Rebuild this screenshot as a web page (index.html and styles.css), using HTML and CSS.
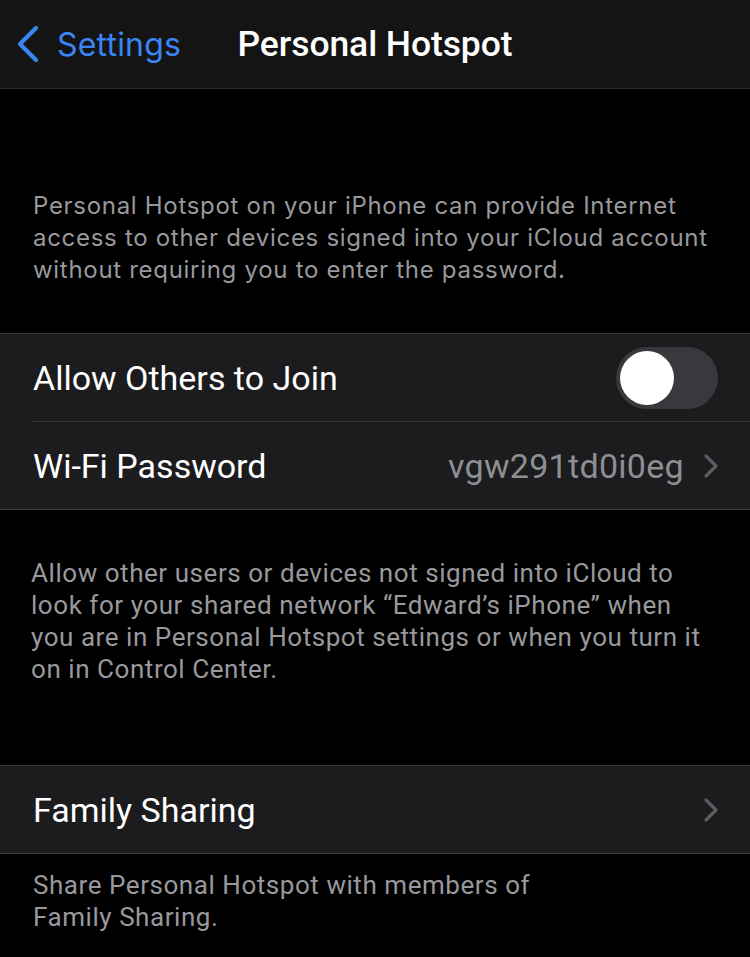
FILE: index.html
```html
<!DOCTYPE html>
<html lang="en">
<head>
  <meta charset="UTF-8">
  <meta name="viewport" content="width=device-width, initial-scale=1.0">
  <title>Personal Hotspot</title>
  <link rel="stylesheet" href="styles.css">
</head>
<body>
  <header class="navbar">
    <a class="back" href="#">
      <svg class="back-icon" width="26" height="40" viewBox="0 0 26 40"><path d="M22 4 L6 20 L22 36" fill="none" stroke="#3a85f3" stroke-width="4.2" stroke-linecap="round" stroke-linejoin="round"/></svg>
      <span>Settings</span>
    </a>
    <h1 class="title">Personal Hotspot</h1>
  </header>

  <p class="note note-top">Personal Hotspot on your iPhone can provide Internet<br>access to other devices signed into your iCloud account<br>without requiring you to enter the password.</p>

  <section class="group">
    <div class="row">
      <span class="label">Allow Others to Join</span>
      <span class="toggle"><span class="knob"></span></span>
    </div>
    <div class="row">
      <span class="label">Wi-Fi Password</span>
      <span class="value">vgw291td0i0eg</span>
      <svg class="chev" width="18" height="28" viewBox="0 0 18 28"><path d="M4 4 L14 14 L4 24" fill="none" stroke="#5b5b60" stroke-width="3.2" stroke-linecap="round" stroke-linejoin="round"/></svg>
    </div>
  </section>

  <p class="note note-mid">Allow other users or devices not signed into iCloud to<br>look for your shared network “Edward’s iPhone” when<br>you are in Personal Hotspot settings or when you turn it<br>on in Control Center.</p>

  <section class="group">
    <div class="row">
      <span class="label">Family Sharing</span>
      <svg class="chev" width="18" height="28" viewBox="0 0 18 28"><path d="M4 4 L14 14 L4 24" fill="none" stroke="#5b5b60" stroke-width="3.2" stroke-linecap="round" stroke-linejoin="round"/></svg>
    </div>
  </section>

  <p class="note note-bottom">Share Personal Hotspot with members of<br>Family Sharing.</p>
</body>
</html>
```

FILE: styles.css
```css
body {
  margin: 0;
  padding: 0;
  background: #000;
  color: #fff;
  font-family: Roboto, 'Noto Sans', sans-serif;
  width: 750px;
  height: 957px;
  overflow: hidden;
}

.navbar {
  position: relative;
  height: 88px;
  background: #141414;
  border-bottom: 1px solid #2b2b2d;
  display: flex;
  align-items: center;
  justify-content: center;
}

.back {
  position: absolute;
  left: 14px;
  top: 24px;
  display: flex;
  align-items: center;
  gap: 17px;
  color: #3a85f3;
  text-decoration: none;
  font-family: Inter, sans-serif;
  font-size: 32px;
  letter-spacing: 0.2px;
}

.title {
  margin: 0;
  font-size: 35.5px;
  font-weight: 500;
  letter-spacing: -0.1px;
}

.note {
  margin: 0;
  color: #98989d;
  font-size: 26px;
  letter-spacing: 0.55px;
  line-height: 32px;
  padding: 0 33px;
  white-space: nowrap;
}

.note-top {
  font-family: Inter, sans-serif;
  font-size: 24px;
  letter-spacing: 0.7px;
  padding-top: 101px;
  padding-bottom: 47px;
}

.note-mid {
  padding: 47px 31px 80px;
}

.note-bottom {
  padding-top: 15px;
}

.group {
  background: #1c1c1e;
  border-top: 1px solid #38383a;
  border-bottom: 1px solid #38383a;
}

.row {
  height: 87px;
  display: flex;
  align-items: center;
  margin-left: 33px;
  padding-right: 30px;
  gap: 18px;
}

.row + .row {
  border-top: 1px solid #38383a;
}

.label {
  flex: 1;
  font-size: 34px;
}

.value {
  color: #8e8e93;
  font-size: 34px;
  letter-spacing: 0.3px;
}

.toggle {
  width: 102px;
  height: 62px;
  margin-right: 2px;
  border-radius: 31px;
  background: #39393d;
  display: flex;
  align-items: center;
  padding-left: 4px;
  box-sizing: border-box;
}

.knob {
  width: 54px;
  height: 54px;
  border-radius: 50%;
  background: #fff;
}
```
